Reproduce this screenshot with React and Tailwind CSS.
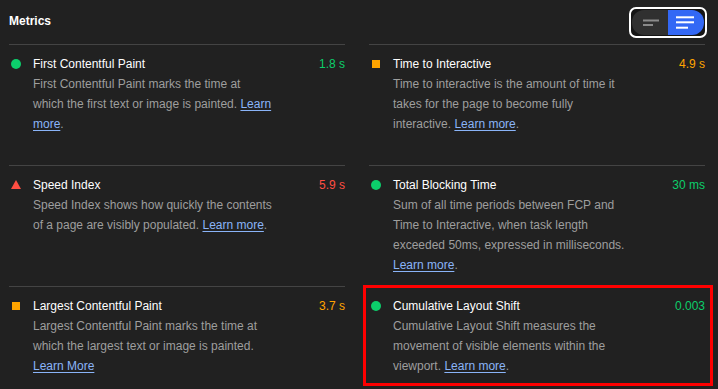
import React from "react";

const metrics = [
  {
    title: "First Contentful Paint",
    value: "1.8 s",
    status: "pass",
    lines: ["First Contentful Paint marks the time at", "which the first text or image is painted."],
    linkOwnLine: false,
    link: "Learn",
    link2: "more",
    dot: true,
  },
  {
    title: "Time to Interactive",
    value: "4.9 s",
    status: "average",
    lines: ["Time to interactive is the amount of time it", "takes for the page to become fully", "interactive."],
    link: "Learn more",
    dot: true,
  },
  {
    title: "Speed Index",
    value: "5.9 s",
    status: "fail",
    lines: ["Speed Index shows how quickly the contents", "of a page are visibly populated."],
    link: "Learn more",
    dot: true,
  },
  {
    title: "Total Blocking Time",
    value: "30 ms",
    status: "pass",
    lines: [
      "Sum of all time periods between FCP and",
      "Time to Interactive, when task length",
      "exceeded 50ms, expressed in milliseconds.",
    ],
    linkOwnLine: true,
    link: "Learn more",
    dot: true,
  },
  {
    title: "Largest Contentful Paint",
    value: "3.7 s",
    status: "average",
    lines: ["Largest Contentful Paint marks the time at", "which the largest text or image is painted."],
    linkOwnLine: true,
    link: "Learn More",
    dot: false,
  },
  {
    title: "Cumulative Layout Shift",
    value: "0.003",
    status: "pass",
    lines: ["Cumulative Layout Shift measures the", "movement of visible elements within the", "viewport."],
    link: "Learn more",
    dot: true,
    highlight: true,
  },
];

function Icon({ status }) {
  if (status === "pass") {
    return <span className="block w-[10px] h-[10px] rounded-full bg-[#0cce6b] ml-[2px] mt-[5px]" />;
  }
  if (status === "average") {
    return <span className="block w-[8px] h-[8px] bg-[#ffa400] ml-[3px] mt-[6px]" />;
  }
  return (
    <svg width="10" height="9" viewBox="0 0 10 9" className="block ml-[2px] mt-[5px]">
      <polygon points="5,0 10,9 0,9" fill="#ff4e42" />
    </svg>
  );
}

const valueColor = {
  pass: "text-[#0cce6b]",
  average: "text-[#ffa400]",
  fail: "text-[#ff4e42]",
};

function Link({ children }) {
  return <a className="text-[#8ab4f8] underline underline-offset-2">{children}</a>;
}

function Desc({ m }) {
  const last = m.lines.length - 1;
  return (
    <p className="text-[#9e9e9e] leading-[20px] whitespace-nowrap">
      {m.lines.map((l, i) => (
        <React.Fragment key={i}>
          {l}
          {i === last ? (
            m.link2 ? (
              <>
                {" "}
                <Link>{m.link}</Link>
                <br />
                <Link>{m.link2}</Link>
                {m.dot ? "." : ""}
              </>
            ) : m.linkOwnLine ? (
              <>
                <br />
                <Link>{m.link}</Link>
                {m.dot ? "." : ""}
              </>
            ) : (
              <>
                {" "}
                <Link>{m.link}</Link>
                {m.dot ? "." : ""}
              </>
            )
          ) : (
            <br />
          )}
        </React.Fragment>
      ))}
    </p>
  );
}

function Metric({ m }) {
  return (
    <div className="relative border-t border-[#444444] pt-[9px] pb-[11px]">
      <div className="flex">
        <div className="w-[24px] shrink-0">
          <Icon status={m.status} />
        </div>
        <div className="flex-1 min-w-0">
          <div className="flex justify-between leading-[20px]">
            <span className="text-white">{m.title}</span>
            <span className={valueColor[m.status]}>{m.value}</span>
          </div>
          <Desc m={m} />
        </div>
      </div>
      {m.highlight && (
        <div className="absolute left-[-6px] right-[-8px] top-[-2px] h-[101px] border-[3px] border-[#ff0000] pointer-events-none" />
      )}
    </div>
  );
}

function Toggle() {
  return (
    <div className="w-[78px] h-[31px] -mr-[2px] border-2 border-white rounded-[7px] bg-[#151515] p-[1px] flex">
      <div className="flex-1 h-full rounded-l-[12px] bg-[#303030] flex">
        <svg width="35" height="25" viewBox="0 0 35 25">
          <rect x="11" y="9.5" width="16" height="2" fill="#8a8a8a" />
          <rect x="11" y="14" width="10" height="2" fill="#8a8a8a" />
        </svg>
      </div>
      <div className="flex-1 h-full rounded-r-[12px] bg-[#3368f5] flex">
        <svg width="35" height="25" viewBox="0 0 35 25">
          <rect x="8" y="6.3" width="18" height="2" fill="#ffffff" />
          <rect x="8" y="11.3" width="18" height="2" fill="#ffffff" />
          <rect x="8" y="16.7" width="12" height="2" fill="#ffffff" />
        </svg>
      </div>
    </div>
  );
}

export default function App() {
  return (
    <div
      className="w-[718px] h-[389px] overflow-hidden bg-[#212121] text-[12px] pl-[9px] pr-[13px]"
      style={{ fontFamily: '"Liberation Sans", Arial, sans-serif' }}
    >
      <div className="flex items-start justify-between pt-[7px] h-[44px]">
        <span className="text-white font-bold leading-[20px] mt-[4px]">Metrics</span>
        <Toggle />
      </div>
      <div className="grid grid-cols-2 gap-x-[24px] auto-rows-fr">
        {metrics.map((m) => (
          <Metric key={m.title} m={m} />
        ))}
      </div>
    </div>
  );
}
